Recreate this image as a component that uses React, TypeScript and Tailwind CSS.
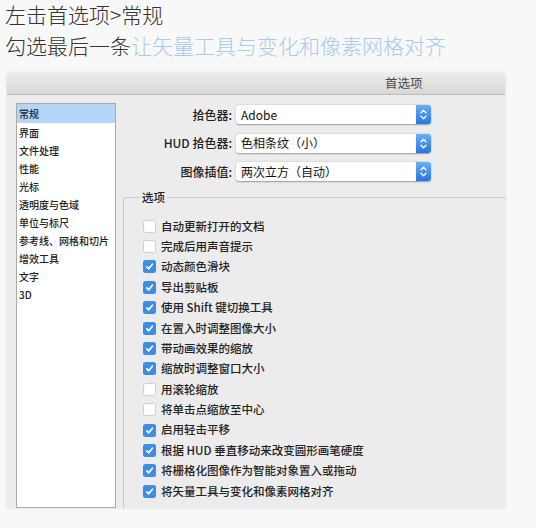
const sidebarItems = ['常规', '界面', '文件处理', '性能', '光标', '透明度与色域', '单位与标尺', '参考线、网格和切片', '增效工具', '文字', '3D']

const pickers = [
  { label: '拾色器:', value: 'Adobe' },
  { label: 'HUD 拾色器:', value: '色相条纹（小）' },
  { label: '图像插值:', value: '两次立方（自动）' },
]

const options: [string, boolean][] = [
  ['自动更新打开的文档', false],
  ['完成后用声音提示', false],
  ['动态颜色滑块', true],
  ['导出剪贴板', true],
  ['使用 Shift 键切换工具', true],
  ['在置入时调整图像大小', true],
  ['带动画效果的缩放', true],
  ['缩放时调整窗口大小', true],
  ['用滚轮缩放', false],
  ['将单击点缩放至中心', false],
  ['启用轻击平移', true],
  ['根据 HUD 垂直移动来改变圆形画笔硬度', true],
  ['将栅格化图像作为智能对象置入或拖动', true],
  ['将矢量工具与变化和像素网格对齐', true],
]

function Stepper() {
  return (
    <div className="flex h-full w-[15px] items-center justify-center rounded-r-[3px] bg-gradient-to-b from-[#6aaef6] to-[#2676e0]">
      <svg width="9" height="13" viewBox="0 0 9 13" fill="none" stroke="white" strokeWidth="1.3" strokeLinecap="round" strokeLinejoin="round">
        <path d="M2 4.8 L4.5 2.3 L7 4.8" />
        <path d="M2 8.2 L4.5 10.7 L7 8.2" />
      </svg>
    </div>
  )
}

function Checkbox({ checked }: { checked: boolean }) {
  if (checked) {
    return (
      <span className="flex h-[13px] w-[13px] items-center justify-center rounded-[2.5px] bg-[#3b8de8]">
        <svg width="11" height="11" viewBox="0 0 11 11" fill="none" stroke="white" strokeWidth="1.7" strokeLinecap="round" strokeLinejoin="round">
          <path d="M2.8 5.8 L4.7 7.8 L8.4 3.2" />
        </svg>
      </span>
    )
  }
  return <span className="h-[13px] w-[13px] rounded-[2.5px] border border-[#cfcfcf] bg-white" />
}

export default function App() {
  return (
    <div className="min-h-[528px] w-[536px] overflow-hidden bg-[#f8f8f8] font-['Noto_Sans_CJK_SC','Noto_Sans',sans-serif]">
      {/* Caption */}
      <div className="pl-[5px] text-[21px] font-light leading-[28px] text-[#333]">
        <div>左击首选项&gt;常规</div>
        <div className="mt-[3px]">
          勾选最后一条<span className="text-[#a6cbec]">让矢量工具与变化和像素网格对齐</span>
        </div>
      </div>

      {/* Preferences window */}
      <div className="mt-[14px] ml-[7px] flex h-[435px] w-[498px] flex-col overflow-hidden bg-[#ececec] shadow-[0_0_3px_rgba(0,0,0,0.12)]">
        <div className="flex h-[22px] shrink-0 items-center border-b border-[#bdbdbd] bg-gradient-to-b from-[#ececec] to-[#d7d7d7] pl-[378px] text-[12.5px] text-[#4a4a4a]">
          首选项
        </div>

        <div className="flex min-h-0 flex-1">
          {/* Sidebar */}
          <div className="mt-[8px] ml-[9px] w-[100px] shrink-0 border border-[#a9a9a9] bg-white text-[10px] font-medium text-[#222]">
            {sidebarItems.map((item, i) => (
              <div
                key={item}
                className={`flex items-center pl-[2px] ${i === 0 ? 'h-[19px] bg-[#b4d5f7]' : 'h-[18px]'}`}
              >
                {item}
              </div>
            ))}
          </div>

          {/* Right pane */}
          <div className="flex min-w-0 flex-1 flex-col">
            <div className="mt-[10px] flex flex-col gap-[9.5px]">
              {pickers.map(p => (
                <div key={p.label} className="flex h-[19px] items-center">
                  <div className="w-[120px] pr-[4px] text-right text-[12px] font-medium text-[#222]">{p.label}</div>
                  <div className="flex h-[19px] w-[195px] rounded-[3px] bg-white shadow-[0_0.5px_1.5px_rgba(0,0,0,0.35)]">
                    <div className="flex flex-1 items-center pl-[5px] text-[12px] text-[#111]">{p.value}</div>
                    <Stepper />
                  </div>
                </div>
              ))}
            </div>

            <fieldset className="mt-[8px] ml-[7px] mr-[-20px] rounded-[4px] border border-[#c9c9c9] pl-[16px]">
              <legend className="px-[2px] text-[11.5px] font-medium leading-[16px] text-[#222]">选项</legend>
              <div className="mt-[11px] ml-[3px] flex flex-col">
                {options.map(([label, checked]) => (
                  <div key={label} className="flex h-[20.4px] items-center gap-[5px] text-[11.5px] font-medium text-[#222]">
                    <Checkbox checked={checked} />
                    <span>{label}</span>
                  </div>
                ))}
              </div>
              <div className="h-[40px]" />
            </fieldset>
          </div>
        </div>
      </div>
    </div>
  )
}
